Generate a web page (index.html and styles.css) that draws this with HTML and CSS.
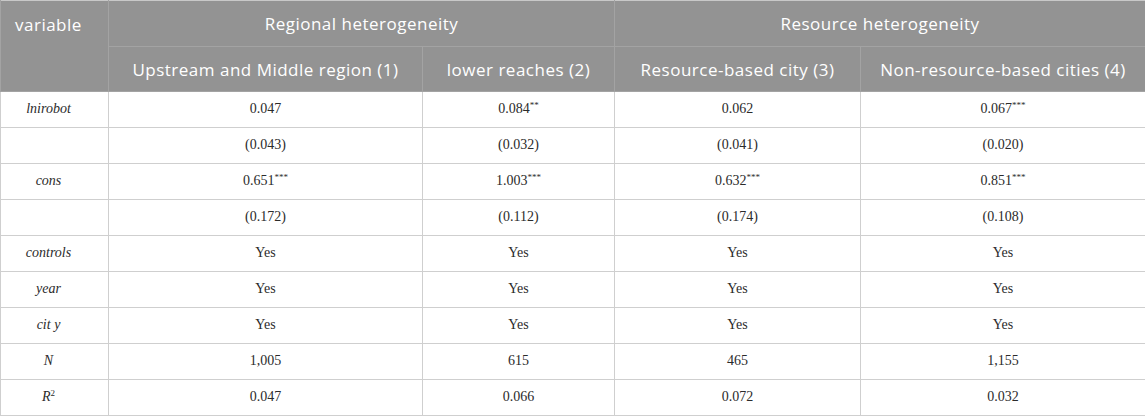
FILE: index.html
```html
<!DOCTYPE html>
<html>
<head>
<meta charset="utf-8">
<link rel="stylesheet" href="styles.css">
</head>
<body>
<table class="tbl">
  <colgroup>
    <col class="c0"><col class="c1"><col class="c2"><col class="c3"><col class="c4">
  </colgroup>
  <thead>
    <tr class="h1">
      <th class="var" rowspan="2">variable</th>
      <th colspan="2">Regional heterogeneity</th>
      <th colspan="2">Resource heterogeneity</th>
    </tr>
    <tr class="h2">
      <th>Upstream and Middle region (1)</th>
      <th>lower reaches (2)</th>
      <th>Resource-based city (3)</th>
      <th>Non-resource-based cities (4)</th>
    </tr>
  </thead>
  <tbody>
    <tr><td class="name">lnirobot</td><td>0.047</td><td>0.084<sup>**</sup></td><td>0.062</td><td>0.067<sup>***</sup></td></tr>
    <tr><td class="name"></td><td>(0.043)</td><td>(0.032)</td><td>(0.041)</td><td>(0.020)</td></tr>
    <tr><td class="name">cons</td><td>0.651<sup>***</sup></td><td>1.003<sup>***</sup></td><td>0.632<sup>***</sup></td><td>0.851<sup>***</sup></td></tr>
    <tr><td class="name"></td><td>(0.172)</td><td>(0.112)</td><td>(0.174)</td><td>(0.108)</td></tr>
    <tr><td class="name">controls</td><td>Yes</td><td>Yes</td><td>Yes</td><td>Yes</td></tr>
    <tr><td class="name">year</td><td>Yes</td><td>Yes</td><td>Yes</td><td>Yes</td></tr>
    <tr><td class="name">cit y</td><td>Yes</td><td>Yes</td><td>Yes</td><td>Yes</td></tr>
    <tr><td class="name">N</td><td>1,005</td><td>615</td><td>465</td><td>1,155</td></tr>
    <tr><td class="name">R<sup class="sq">2</sup></td><td>0.047</td><td>0.066</td><td>0.072</td><td>0.032</td></tr>
  </tbody>
</table>
</body>
</html>
```
FILE: styles.css
```css
html, body {
  margin: 0;
  padding: 0;
  background: #ffffff;
}

.tbl {
  border-collapse: collapse;
  table-layout: fixed;
  width: 1145px;
  border: 1px solid #c8c8c8;
}

.c0 { width: 108px; }
.c1 { width: 314px; }
.c2 { width: 192px; }
.c3 { width: 246px; }
.c4 { width: 285px; }

.tbl th {
  background: #939393;
  color: #ffffff;
  font-family: "Open Sans", "Lato", sans-serif;
  font-weight: 400;
  font-size: 17px;
  letter-spacing: 0.5px;
  text-align: center;
  padding: 0 4px;
  border: 1px solid #a3a3a3;
  border-top: none;
}

.tbl .h1 th { height: 45px; }
.tbl .h2 th { height: 44px; }

.tbl th.var {
  text-align: left;
  vertical-align: top;
  padding: 12px 14px 0;
}

.tbl tbody tr:first-child td {
  border-top: 1px solid #9a9a9a;
}

.tbl td {
  height: 33px;
  padding: 0 6px 2px;
  font-family: "Liberation Serif", "Times New Roman", serif;
  font-size: 14px;
  color: #2b2b2b;
  text-align: center;
  border: 1px solid #cfcfcf;
}

.tbl td.name {
  font-style: italic;
  padding-right: 18px;
}

.tbl sup {
  font-size: 9px;
  vertical-align: 5px;
  line-height: 0;
}

.tbl sup.sq {
  font-style: normal;
}
```
